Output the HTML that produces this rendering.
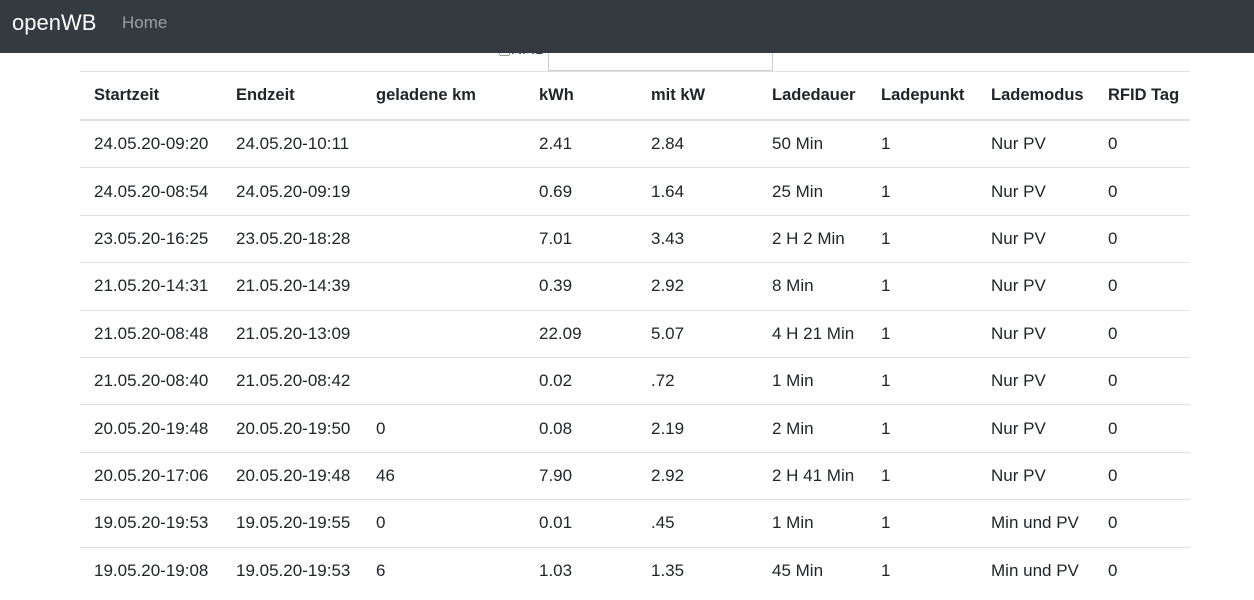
<!DOCTYPE html>
<html><head><meta charset="utf-8"><style>
body{margin:0;background:#fff;font-family:"Liberation Sans",Arial,sans-serif;color:#212529;width:1254px;height:600px;overflow:hidden;position:relative}
.nav{position:absolute;top:0;left:0;width:1254px;height:53px;background:#343a40;z-index:2}
.brand{position:absolute;left:12px;top:10px;color:#fff;font-size:22px}
.home{position:absolute;left:122px;top:13px;color:rgba(255,255,255,.5);font-size:17px}
.rfid{position:absolute;left:499px;top:41px;font-size:15px;color:#333}
.cb{display:inline-block;width:9px;height:9px;border:1px solid #999;border-radius:2px;vertical-align:middle;margin-right:1px}
.box{position:absolute;left:548px;top:40px;width:223px;height:30px;border:1px solid #ccc;border-top:none}
table{position:absolute;left:80px;top:71px;width:1110px;border-collapse:collapse;font-size:17px}
td,th{text-align:left;padding:0 0 0 14px;border-top:1px solid #dee2e6;height:46.4px;white-space:nowrap}
th{height:47px;border-bottom:2px solid #dee2e6;font-weight:bold;font-size:16.5px}
</style></head><body>
<div class="nav"><span class="brand">openWB</span><span class="home">Home</span></div>
<div class="rfid"><span class="cb"></span>RFID</div>
<div class="box"></div>
<table>
<colgroup><col style="width:142px"><col style="width:140px"><col style="width:163px"><col style="width:112px"><col style="width:121px"><col style="width:109px"><col style="width:110px"><col style="width:117px"><col></colgroup>
<tr><th>Startzeit</th><th>Endzeit</th><th>geladene km</th><th>kWh</th><th>mit kW</th><th>Ladedauer</th><th>Ladepunkt</th><th>Lademodus</th><th>RFID Tag</th></tr>
<tr><td>24.05.20-09:20</td><td>24.05.20-10:11</td><td></td><td>2.41</td><td>2.84</td><td>50 Min</td><td>1</td><td>Nur PV</td><td>0</td></tr>
<tr><td>24.05.20-08:54</td><td>24.05.20-09:19</td><td></td><td>0.69</td><td>1.64</td><td>25 Min</td><td>1</td><td>Nur PV</td><td>0</td></tr>
<tr><td>23.05.20-16:25</td><td>23.05.20-18:28</td><td></td><td>7.01</td><td>3.43</td><td>2 H 2 Min</td><td>1</td><td>Nur PV</td><td>0</td></tr>
<tr><td>21.05.20-14:31</td><td>21.05.20-14:39</td><td></td><td>0.39</td><td>2.92</td><td>8 Min</td><td>1</td><td>Nur PV</td><td>0</td></tr>
<tr><td>21.05.20-08:48</td><td>21.05.20-13:09</td><td></td><td>22.09</td><td>5.07</td><td>4 H 21 Min</td><td>1</td><td>Nur PV</td><td>0</td></tr>
<tr><td>21.05.20-08:40</td><td>21.05.20-08:42</td><td></td><td>0.02</td><td>.72</td><td>1 Min</td><td>1</td><td>Nur PV</td><td>0</td></tr>
<tr><td>20.05.20-19:48</td><td>20.05.20-19:50</td><td>0</td><td>0.08</td><td>2.19</td><td>2 Min</td><td>1</td><td>Nur PV</td><td>0</td></tr>
<tr><td>20.05.20-17:06</td><td>20.05.20-19:48</td><td>46</td><td>7.90</td><td>2.92</td><td>2 H 41 Min</td><td>1</td><td>Nur PV</td><td>0</td></tr>
<tr><td>19.05.20-19:53</td><td>19.05.20-19:55</td><td>0</td><td>0.01</td><td>.45</td><td>1 Min</td><td>1</td><td>Min und PV</td><td>0</td></tr>
<tr><td>19.05.20-19:08</td><td>19.05.20-19:53</td><td>6</td><td>1.03</td><td>1.35</td><td>45 Min</td><td>1</td><td>Min und PV</td><td>0</td></tr>
</table>
</body></html>
